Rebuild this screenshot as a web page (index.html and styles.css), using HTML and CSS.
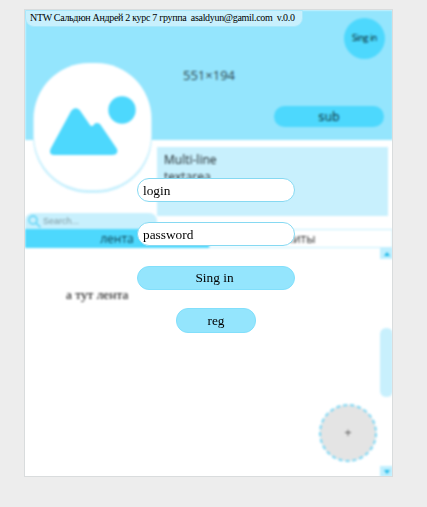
FILE: index.html
```html
<!DOCTYPE html>
<html lang="ru">
<head>
<meta charset="utf-8">
<title>NTW</title>
<link rel="stylesheet" href="styles.css">
</head>
<body>
<main class="card">
  <div class="profile">
    <header class="cover">
      <span class="cover-size">551×194</span>
      <div class="cover-actions">
        <div class="round-button">Sing in</div>
        <div class="sub-button">sub</div>
      </div>
    </header>
    <section class="info">
      <div class="side">
        <div class="avatar">
          <svg width="117" height="127" viewBox="0 0 117 127">
            <circle cx="88" cy="47" r="13.700" fill="#4dd8fd"/>
            <path d="M20 92c-4 0-5-3-3-7l19-35c3-6 8-6 11-1l9 13c1 2 3 1 4-.5 2-2 5-2 7 1l15 22c3 4 1 7.500-4 7.500z" fill="#4dd8fd"/>
          </svg>
        </div>
        <div class="search">
          <svg width="13" height="13" viewBox="0 0 13 13" fill="none" stroke="#6fd8f7" stroke-width="1.800"><circle cx="5" cy="5" r="4"/><path d="M8 8l4.500 4.500"/></svg>
          <span>Search...</span>
        </div>
      </div>
      <div class="about">Multi-line<br>textarea</div>
    </section>
    <nav class="tabs">
      <div class="tab active">лента</div>
      <div class="tab">хиты</div>
    </nav>
    <section class="feed">
      <p class="feed-text">а тут лента</p>
      <div class="add">
        <svg width="58" height="58" viewBox="0 0 58 58">
          <circle cx="29" cy="29" r="28" fill="#e4e4e4" stroke="#7cd7f4" stroke-width="2" stroke-dasharray="4.400 2.640"/>
        </svg>
        <span>+</span>
      </div>
      <div class="scrollbar">
        <div class="arrow"><svg width="6" height="4" viewBox="0 0 6 4"><path d="M3 0l3 4H0z" fill="#18b8e8"/></svg></div>
        <div class="thumb"></div>
        <div class="arrow"><svg width="6" height="4" viewBox="0 0 6 4"><path d="M0 0h6L3 4z" fill="#18b8e8"/></svg></div>
      </div>
    </section>
  </div>
  <div class="version">NTW Сальдюн Андрей 2 курс 7 группа&nbsp; asaldyun@gamil.com&nbsp; v.0.0</div>
  <form class="login">
    <div class="field">login</div>
    <div class="field">password</div>
    <div class="submit">Sing in</div>
    <div class="register">reg</div>
  </form>
</main>
</body>
</html>
```
FILE: styles.css
```css
* { box-sizing: border-box; }
body {
  margin: 0;
  padding: 9px 0 0 24px;
  height: 507px;
  overflow: hidden;
  background: #ededed;
  font-family: "Liberation Serif", serif;
  color: #000;
}
.card {
  position: relative;
  width: 369px;
  height: 468px;
  border: 1px solid #d9dcdd;
  background: #fff;
  overflow: hidden;
}
.profile { width: 368px; height: 467px; filter: blur(1.3px); }
.cover {
  display: grid;
  grid-template-columns: 129px 110px 120px;
  height: 130px;
  background: #94e5fd;
}
.cover-size {
  grid-column: 2;
  align-self: center;
  text-align: center;
  font: 13px/16px "Open Sans", sans-serif;
  color: #2a444d;
}
.cover-actions {
  display: flex;
  flex-direction: column;
  align-items: flex-end;
  justify-content: space-between;
  padding: 8px 0 13px;
}
.round-button {
  width: 41px;
  height: 41px;
  margin-right: -1px;
  border-radius: 50%;
  background: #4dd8fd;
  font: 9px/40px "Open Sans", sans-serif;
  letter-spacing: -0.400px;
  text-align: center;
  color: #00141a;
}
.sub-button {
  width: 110px;
  height: 21px;
  border-radius: 11px;
  background: #4dd8fd;
  font: 12px/22px "DejaVu Sans", sans-serif;
  text-align: center;
  color: #0c3c4a;
}
.info { display: flex; height: 89px; }
.side {
  display: flex;
  flex-direction: column;
  justify-content: space-between;
  width: 132px;
}
.avatar {
  width: 117px;
  height: 127px;
  margin: -77px 0 0 9px;
  border-radius: 55px;
  background: #fff;
  box-shadow: 0 2px 0 1px #c8f0fd;
}
.avatar svg { display: block; }
.search {
  display: flex;
  align-items: center;
  gap: 2px;
  height: 16px;
  padding-left: 3px;
  border-radius: 8px 8px 0 0;
  background: #c8f0fd;
  font: 9px/14px "Liberation Sans", sans-serif;
  color: #7d98a0;
}
.about {
  width: 231px;
  height: 69px;
  margin-top: 7px;
  padding: 4px 7px;
  background: #c8f0fd;
  font: 12px/17px "Open Sans", sans-serif;
  color: #1a2225;
}
.tabs { display: flex; height: 19px; }
.tab {
  width: 50%;
  border: 1px solid #c4effe;
  font: 12px/18px "Open Sans", sans-serif;
  text-align: center;
  color: #333;
}
.tab.active {
  border-color: #4dd8fd;
  background: #4dd8fd;
  color: #0a4152;
}
.feed { display: flex; height: 229px; }
.feed-text {
  width: 294px;
  margin: 0;
  padding: 39px 0 0 41px;
  font-size: 13.330px;
  line-height: 16px;
}
.add {
  display: grid;
  place-items: center;
  align-self: flex-end;
  width: 58px;
  height: 58px;
  margin: 0 3px 15px 0;
  font: 12px/14px "Liberation Sans", sans-serif;
  color: #555;
}
.add > * { grid-area: 1 / 1; }
.scrollbar {
  display: flex;
  flex-direction: column;
  width: 13px;
}
.arrow {
  display: grid;
  place-items: center;
  flex: none;
  height: 11px;
  background: #bfeffe;
}
.arrow:last-child { margin-top: auto; }
.thumb {
  height: 69px;
  margin-top: 69px;
  border-radius: 6px;
  background: #c8f0fd;
}
.version {
  position: absolute;
  top: 0;
  left: 0;
  width: 278px;
  height: 17px;
  padding-left: 4px;
  border: 1px solid #a9e8fb;
  border-radius: 0 0 9px 9px;
  background: #c8f0fd;
  font-size: 10px;
  letter-spacing: -0.310px;
  line-height: 13px;
  white-space: pre;
}
.login {
  position: absolute;
  top: 168px;
  left: 112px;
  display: flex;
  flex-direction: column;
  align-items: center;
  width: 158px;
  font-size: 13.330px;
}
.field, .submit, .register {
  width: 158px;
  height: 24px;
  border: 1px solid #86d9f2;
  border-radius: 12px;
  line-height: 23px;
}
.field {
  margin-bottom: 20px;
  padding-left: 5px;
  background: #fff;
}
.submit, .register {
  border-color: #82dffb;
  background: #94e5fd;
  text-align: center;
}
.submit { padding-right: 3px; line-height: 22px; }
.register { width: 80px; height: 25px; margin-top: 18px; }
```
